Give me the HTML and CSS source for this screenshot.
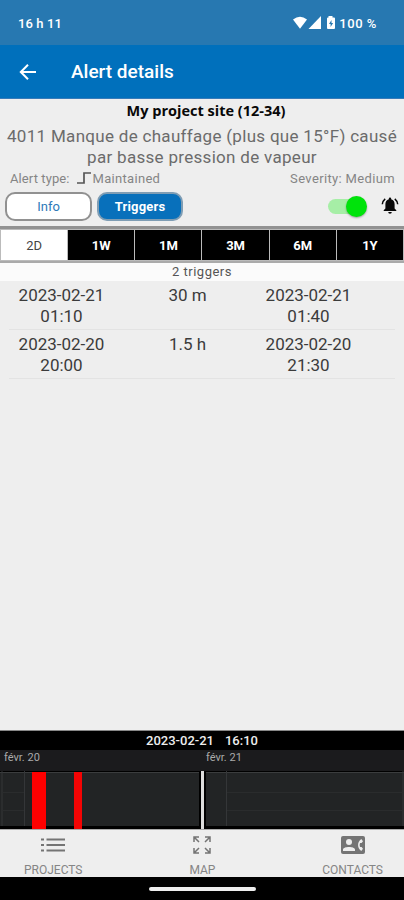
FILE: index.html
```html
<!DOCTYPE html>
<html lang="fr">
<head>
<meta charset="utf-8">
<title>Alert details</title>
<link rel="stylesheet" href="styles.css">
</head>
<body>
<div class="status">
  <span class="clock">16 h 11</span>
  <svg class="signals" width="44" height="14" viewBox="0 0 44 14" fill="#fff">
    <path d="M1 3.5Q8 -2 15 3.5L8 12.8Z"/>
    <path d="M29 0V13H16.500Z"/>
    <path fill-rule="evenodd" d="M36.500 0h4v1.500h1.500q1 0 1 1v9.500q0 1-1 1h-6q-1 0-1-1V2.500q0-1 1-1h.5zM39.500 4l-2.500 4h1.600v3l2.500-4h-1.600z"/>
  </svg>
  <span class="battery">100 %</span>
</div>
<header class="appbar">
  <svg width="18" height="18" viewBox="0 0 18 18" fill="none" stroke="#fff" stroke-width="2"><path d="M17 9H2.500M9 1.800L1.800 9L9 16.200"/></svg>
  <h1><span>Alert details</span></h1>
</header>
<section class="summary">
  <h2><span>My project site (12-34)</span></h2>
  <p class="description"><span class="line1">4011 Manque de chauffage (plus que 15°F) causé</span><br><span class="line2">par basse pression de vapeur</span></p>
  <div class="meta">
    <span class="type">Alert type:</span>
    <svg width="15" height="14" viewBox="0 0 15 14" fill="none" stroke="#555" stroke-width="1.700"><path d="M0 12H7V2H14"/></svg>
    <span class="kind">Maintained</span>
    <span class="severity">Severity: Medium</span>
  </div>
  <div class="controls">
    <button class="pill info"><span>Info</span></button>
    <button class="pill triggers"><span>Triggers</span></button>
    <span class="toggle"><span class="knob"></span></span>
    <svg class="bell" width="18" height="18" viewBox="0 0 18 18" fill="#080808">
      <path d="M9 .5a1.200 1.200 0 0 1 1.200 1.200v.6C12.500 3 13.600 4.800 13.600 7v4.500L15.300 13.200V14H2.700v-.8L4.400 11.500V7C4.400 4.800 5.500 3 7.800 2.300v-.6A1.200 1.200 0 0 1 9 .5zM7.200 15h3.600a1.800 1.800 0 0 1-3.600 0z"/>
      <path d="M4.200 1.800Q1.500 4 1.300 7.300M13.800 1.800Q16.500 4 16.700 7.300" fill="none" stroke="#080808" stroke-width="1.500"/>
    </svg>
  </div>
</section>
<nav class="ranges">
  <span class="selected">2D</span><span>1W</span><span>1M</span><span>3M</span><span>6M</span><span>1Y</span>
</nav>
<div class="count"><span>2 triggers</span></div>
<main>
  <div class="row"><span class="date">2023-02-21<br>01:10</span><span class="duration">30 m</span><span class="date">2023-02-21<br>01:40</span></div>
  <div class="row"><span class="date">2023-02-20<br>20:00</span><span class="duration">1.5 h</span><span class="date">2023-02-20<br>21:30</span></div>
</main>
<section class="timeline">
  <div class="moment"><span>2023-02-21</span><span>16:10</span></div>
  <div class="days"><span>févr. 20</span><span>févr. 21</span></div>
  <svg class="chart" width="404" height="58" viewBox="0 0 404 58">
    <rect width="404" height="58" fill="#000"/>
    <rect y="1" width="404" height="54" fill="#222425"/>
    <path d="M0 1.500H404" stroke="#3b3d3e"/>
    <path d="M2 0V55M24.500 0V55M226.500 0V55M403 0V55" stroke="#343638"/>
    <path d="M2 21.500H24M2 39.500H24M227 21.500H404M227 39.500H404" stroke="#2a2c2d"/>
    <rect x="32" y="1" width="14" height="57" fill="#f00"/>
    <rect x="74" y="1" width="8" height="57" fill="#f40404"/>
    <rect x="199" width="7" height="58" fill="#000"/>
    <rect x="201" width="3" height="58" fill="#ddd"/>
  </svg>
</section>
<nav class="tabs">
  <div class="tab projects">
    <svg width="24" height="14" viewBox="0 0 24 14" fill="none" stroke="#747474" stroke-width="2"><path d="M0 1.500H3M5.500 1.500H24M0 7H3M5.500 7H24M0 12.500H3M5.500 12.500H24"/></svg>
    <span>PROJECTS</span>
  </div>
  <div class="tab map">
    <svg width="18" height="18" viewBox="0 0 18 18" fill="none" stroke="#747474" stroke-width="1.500"><path d="M1 6V1H6M1 1L6 6M12 1H17V6M17 1L12 6M1 12V17H6M1 17L6 12M17 12V17H12M17 17L12 12"/></svg>
    <span>MAP</span>
  </div>
  <div class="tab contacts">
    <svg width="24" height="18" viewBox="0 0 24 18"><rect width="24" height="18" rx="2" fill="#747474"/><circle cx="8" cy="6" r="3" fill="#eee"/><path d="M2 15v-1.500C2 10 14 10 14 13.500V15zM22 5.200L20.300 3C16 6 16 12 20.300 15L22 12.800 20.600 11H19Q18.200 9 19 7H20.600z" fill="#eee"/></svg>
    <span>CONTACTS</span>
  </div>
</nav>
<footer class="home"><div></div></footer>
</body>
</html>
```

FILE: styles.css
```css
* { box-sizing: border-box; }
body { margin: 0; width: 404px; height: 900px; display: flex; flex-direction: column; overflow: hidden; background: #eee; font-family: Roboto, sans-serif; }
h1, h2, p { margin: 0; }
svg { display: block; flex: none; }
span { white-space: nowrap; }

.status { flex: none; height: 45px; padding: 1px 27px 0 18px; display: flex; align-items: center; background: #2778b1; color: #fff; font: 500 13px Roboto, sans-serif; }
.clock { letter-spacing: 0.1px; }
.signals { margin-left: auto; }
.battery { margin-left: 3px; letter-spacing: 0.55px; }

.appbar { flex: none; height: 54px; padding: 0 19px; display: flex; align-items: center; gap: 34px; background: #0070bc; border-bottom: 1px solid #367bb9; color: #fff; }
.appbar h1 { font-size: 19px; font-weight: 500; }

.summary { flex: none; height: 127px; }
.summary h2 { height: 24px; padding-left: 8px; text-align: center; font: 700 14.5px/24px "Open Sans", sans-serif; color: #080808; }
.description { margin-top: 3px; text-align: center; font-size: 17px; line-height: 21px; color: #6b6b6b; }
.line1 { letter-spacing: 0.3px; }
.line2 { letter-spacing: 0.3px; }
.meta { height: 20px; padding: 0 9px 0 10px; display: flex; align-items: center; font-size: 13px; color: #858585; }
.meta svg { margin-left: 7px; }
.kind { margin-left: 1px; letter-spacing: 0.3px; }
.type { letter-spacing: 0.1px; }
.severity { margin-left: auto; letter-spacing: 0.35px; }
.controls { height: 36px; padding: 0 5px; display: flex; align-items: center; }
.pill { width: 87px; height: 29px; padding: 0; border: 2px solid #919191; border-radius: 10px; background: #fff; font: 400 13px Roboto, sans-serif; color: #2d7ab9; }
.pill.triggers { margin-left: 5px; width: 86px; border-color: #7f9db4; background: #0870bb; color: #fff; font-weight: 700; letter-spacing: 0.2px; }
.toggle { position: relative; margin-left: auto; width: 38px; height: 15px; border-radius: 8px; background: #a6eea6; }
.knob { position: absolute; right: -1px; top: -3px; width: 21px; height: 21px; border-radius: 50%; background: #00e30b; box-shadow: 0 1px 2px #0005; }
.bell { margin-left: 15px; }

.ranges { flex: none; height: 37px; padding: 0 1px; border-top: 3px solid #929292; border-bottom: 2px solid #aaa; display: grid; grid-template-columns: repeat(6, 1fr); gap: 1px; background: #bbb; }
.ranges span { height: 30px; margin-top: 1px; display: flex; align-items: center; justify-content: center; background: #000; color: #fff; font-size: 13px; font-weight: 700; }
.ranges .selected { background: #fff; color: #444; font-weight: 400; }
.count { flex: none; height: 18px; text-align: center; line-height: 18px; font-size: 13px; letter-spacing: 0.5px; color: #555; background: #fbfbfb; }

main { flex: 1; padding: 0 9px; }
.row { height: 49px; padding-top: 4px; border-bottom: 1px solid #e3e3e3; display: grid; grid-template-columns: 105px 147px 95px; text-align: center; font-size: 17px; line-height: 21px; color: #3b3b3b; }
.row .date:last-child { text-align: center; }

.timeline { flex: none; height: 99px; border-top: 1px solid #888; background: #000; }
.moment { height: 19px; display: flex; justify-content: center; gap: 11px; font-size: 13px; line-height: 20px; font-weight: 500; color: #eee; }
.days { height: 21px; padding: 0 4px; display: grid; grid-template-columns: 202px 1fr; background: #1b1b1d; font-size: 11px; line-height: 16px; color: #aaa; }

.tabs { flex: none; height: 48px; border-top: 1px solid #aaa; display: flex; justify-content: space-between; padding: 0 21px 0 24px; }
.tab { display: flex; flex-direction: column; align-items: center; font-size: 12px; color: #858585; }
.tab svg { height: 18px; margin-top: 6px; }
.tab span { margin-top: 9px; line-height: 14px; }
.home { flex: none; height: 23px; padding-top: 10px; background: #000; }
.home div { width: 107px; height: 4px; margin-left: 149px; border-radius: 2px; background: #eee; }
```
